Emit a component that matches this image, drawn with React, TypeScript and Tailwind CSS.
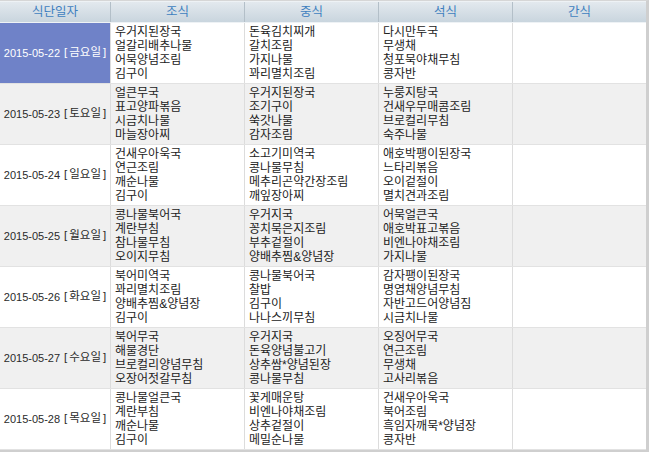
import React from "react";

type Row = { date: string; day: string; b: string[]; l: string[]; d: string[]; sel?: boolean };

const rows: Row[] = [
  { date: "2015-05-22", day: "금요일", sel: true, b: ["우거지된장국", "얼갈리배추나물", "어묵양념조림", "김구이"], l: ["돈육김치찌개", "갈치조림", "가지나물", "꽈리멸치조림"], d: ["다시만두국", "무생채", "청포묵야채무침", "콩자반"] },
  { date: "2015-05-23", day: "토요일", b: ["얼큰무국", "표고양파볶음", "시금치나물", "마늘장아찌"], l: ["우거지된장국", "조기구이", "쑥갓나물", "감자조림"], d: ["누룽지탕국", "건새우무매콤조림", "브로컬리무침", "숙주나물"] },
  { date: "2015-05-24", day: "일요일", b: ["건새우아욱국", "연근조림", "깨순나물", "김구이"], l: ["소고기미역국", "콩나물무침", "메추리곤약간장조림", "깨잎장아찌"], d: ["애호박팽이된장국", "느타리볶음", "오이겉절이", "멸치견과조림"] },
  { date: "2015-05-25", day: "월요일", b: ["콩나물북어국", "계란부침", "참나물무침", "오이지무침"], l: ["우거지국", "꽁치묵은지조림", "부추겉절이", "양배추찜&양념장"], d: ["어묵얼큰국", "애호박표고볶음", "비엔나야채조림", "가지나물"] },
  { date: "2015-05-26", day: "화요일", b: ["북어미역국", "꽈리멸치조림", "양배추찜&양념장", "김구이"], l: ["콩나물북어국", "찰밥", "김구이", "나나스끼무침"], d: ["감자팽이된장국", "명엽채양념무침", "자반고드어양념짐", "시금치나물"] },
  { date: "2015-05-27", day: "수요일", b: ["북어무국", "해물경단", "브로컬리양념무침", "오장어젓갈무침"], l: ["우거지국", "돈육양념불고기", "상추쌈*양념된장", "콩나물무침"], d: ["오징어무국", "연근조림", "무생채", "고사리볶음"] },
  { date: "2015-05-28", day: "목요일", b: ["콩나물얼큰국", "계란부침", "깨순나물", "김구이"], l: ["꽃게매운탕", "비엔나야채조림", "상추겉절이", "메밀순나물"], d: ["건새우아욱국", "북어조림", "흑임자깨묵*양념장", "콩자반"] },
];

const headers = ["식단일자", "조식", "중식", "석식", "간식"];

function Cell({ items }: { items: string[] }) {
  return (
    <div className="border-l border-[#dcdcdc] px-[4px] py-[2px] flex flex-col text-[#222] text-[12px]">
      {items.map((t, i) => (
        <div key={i} className="leading-[14px] h-[14px] whitespace-nowrap">{t}</div>
      ))}
    </div>
  );
}

export default function App() {
  return (
    <div className="w-[650px] h-[452px] bg-white" style={{ fontFamily: '"Liberation Sans", "Noto Sans CJK KR", sans-serif' }}>
      <div className="w-[649px] border-t border-[#d6d6d6] border-r-[3px] border-b-[2px] border-r-[#cfcfcf] border-b-[#cfcfcf] text-[11px]">
        <div className="grid grid-cols-[110px_134px_134px_134px_134px] h-[22px] bg-gradient-to-b from-[#e3e9ee] to-[#c9d5de] border-t border-[#eef2f5] border-b border-[#9ea9b2]">
          {headers.map((h, i) => (
            <div key={i} className={`flex items-center justify-center text-[12.5px] text-[#3f7fbf] ${i > 0 ? "border-l border-[#b3bfc8]" : ""}`}>
              {h}
            </div>
          ))}
        </div>
        {rows.map((r, i) => (
          <div
            key={i}
            className={`grid grid-cols-[110px_134px_134px_134px_134px] h-[61px] border-b border-[#e2e2e2] ${i % 2 === 1 ? "bg-[#f0f0f0]" : "bg-white"}`}
          >
            <div className={`flex items-center justify-center whitespace-nowrap ${r.sel ? "bg-[#6f82c8] text-white" : "text-[#2a2a2a]"}`}>
              <span className="text-[11px]">{r.date}</span>
              <span className="text-[11.5px] ml-[4px] flex items-center">
                <span>[</span>
                <span className="px-[2px]">{r.day}</span>
                <span>]</span>
              </span>
            </div>
            <Cell items={r.b} />
            <Cell items={r.l} />
            <Cell items={r.d} />
            <div className="border-l border-[#dcdcdc]" />
          </div>
        ))}
      </div>
    </div>
  );
}
